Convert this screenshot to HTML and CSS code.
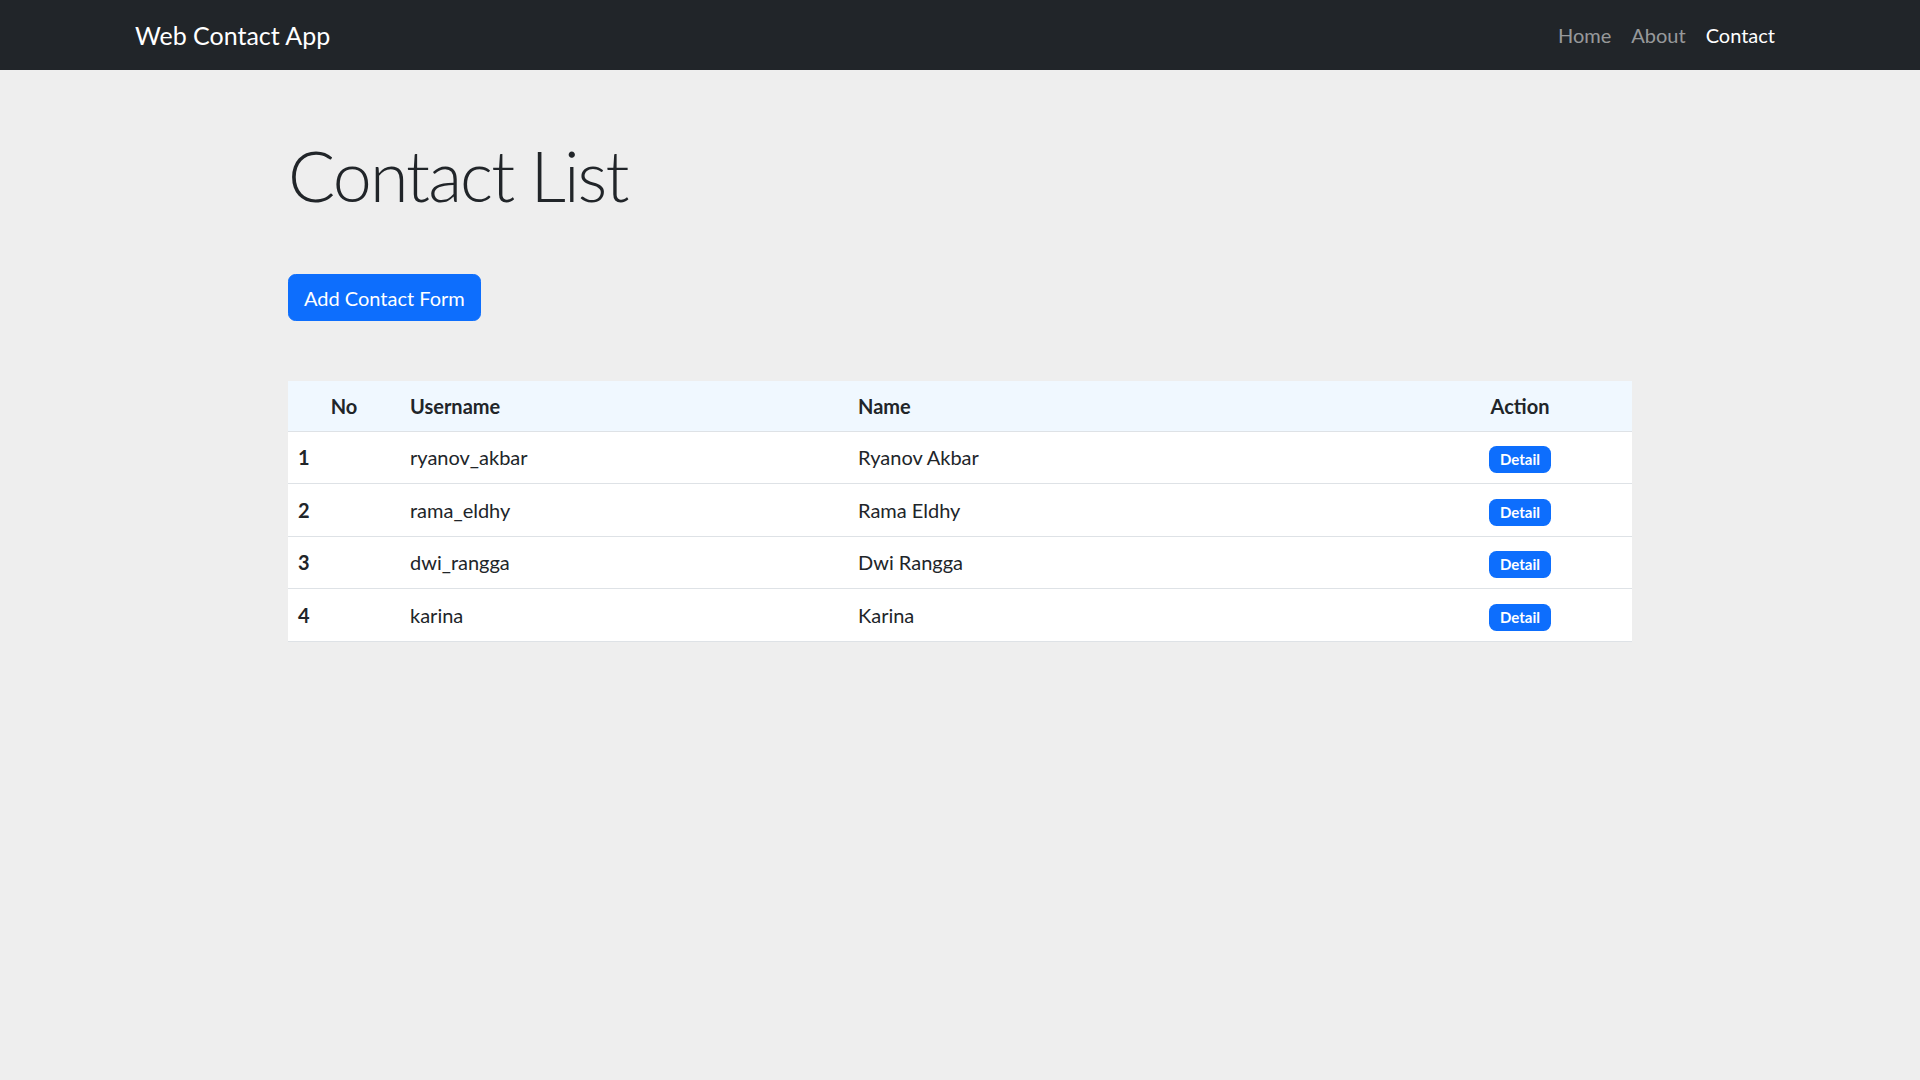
FILE: index.html
```html
<!DOCTYPE html>
<html lang="en">
<head>
<meta charset="utf-8">
<title>Web Contact App</title>
<link rel="stylesheet" href="styles.css">
</head>
<body>
<nav class="navbar">
  <div class="navbar-inner">
    <a class="brand" href="#">Web Contact App</a>
    <ul class="nav">
      <li><a class="nav-link" href="#">Home</a></li>
      <li><a class="nav-link" href="#">About</a></li>
      <li><a class="nav-link active" href="#">Contact</a></li>
    </ul>
  </div>
</nav>
<main class="main">
  <h1 class="title">Contact List</h1>
  <a class="btn-primary" href="#">Add Contact Form</a>
  <table class="contacts">
    <colgroup>
      <col class="c-no">
      <col class="c-user">
      <col class="c-name">
      <col class="c-action">
    </colgroup>
    <thead>
      <tr>
        <th class="center">No</th>
        <th>Username</th>
        <th>Name</th>
        <th class="center">Action</th>
      </tr>
    </thead>
    <tbody>
      <tr><th>1</th><td>ryanov_akbar</td><td>Ryanov Akbar</td><td class="center"><a class="badge" href="#">Detail</a></td></tr>
      <tr><th>2</th><td>rama_eldhy</td><td>Rama Eldhy</td><td class="center"><a class="badge" href="#">Detail</a></td></tr>
      <tr><th>3</th><td>dwi_rangga</td><td>Dwi Rangga</td><td class="center"><a class="badge" href="#">Detail</a></td></tr>
      <tr><th>4</th><td>karina</td><td>Karina</td><td class="center"><a class="badge" href="#">Detail</a></td></tr>
    </tbody>
  </table>
</main>
</body>
</html>
```
FILE: styles.css
```css
* { box-sizing: border-box; }
html, body { margin: 0; padding: 0; }
body {
  background: #eeeeee;
  color: #212529;
  font-family: Lato, "Open Sans", sans-serif;
  font-size: 20px;
  line-height: 30px;
}
a { text-decoration: none; }

.navbar {
  background: #212529;
  height: 70px;
}
.navbar-inner {
  width: 1650px;
  margin: 0 auto;
  height: 100%;
  display: flex;
  align-items: center;
  justify-content: space-between;
}
.brand {
  color: #ffffff;
  font-size: 25px;
  line-height: 37px;
}
.nav {
  list-style: none;
  margin: 0;
  padding: 0;
  display: flex;
}
.nav-link {
  display: block;
  padding: 10px 10px;
  color: rgba(255, 255, 255, 0.55);
}
.nav-link.active { color: #ffffff; }

.main {
  width: 1344px;
  margin: 0 auto;
  padding-top: 63px;
}
.title {
  margin: 0;
  font-size: 70px;
  line-height: 84px;
  font-weight: 300;
  letter-spacing: -1.9px;
}
.btn-primary {
  display: inline-block;
  margin-top: 57px;
  padding: 7.5px 15px;
  border: 1px solid #0d6efd;
  border-radius: 7.5px;
  background: #0d6efd;
  color: #ffffff;
  font-size: 20px;
  line-height: 30px;
}
.contacts {
  margin-top: 60px;
  width: 1344px;
  table-layout: fixed;
  border-collapse: collapse;
  background: #ffffff;
}
.c-no { width: 112px; }
.c-user { width: 448px; }
.c-name { width: 560px; }
.c-action { width: 224px; }

.contacts th, .contacts td {
  padding: 10px 10px;
  border-bottom: 1px solid #dee2e6;
  text-align: left;
  vertical-align: middle;
}
.contacts thead th {
  background: #f0f8ff;
  font-weight: 700;
  line-height: 30px;
}
.contacts tbody th, .contacts tbody td {
  line-height: 31px;
}
.contacts tbody th { font-weight: 700; }
.contacts .center { text-align: center; }

.badge {
  display: inline-block;
  padding: 6px 11.5px;
  border-radius: 7.5px;
  background: #0d6efd;
  color: #ffffff;
  font-size: 15px;
  font-weight: 700;
  line-height: 15px;
  vertical-align: middle;
}
```
